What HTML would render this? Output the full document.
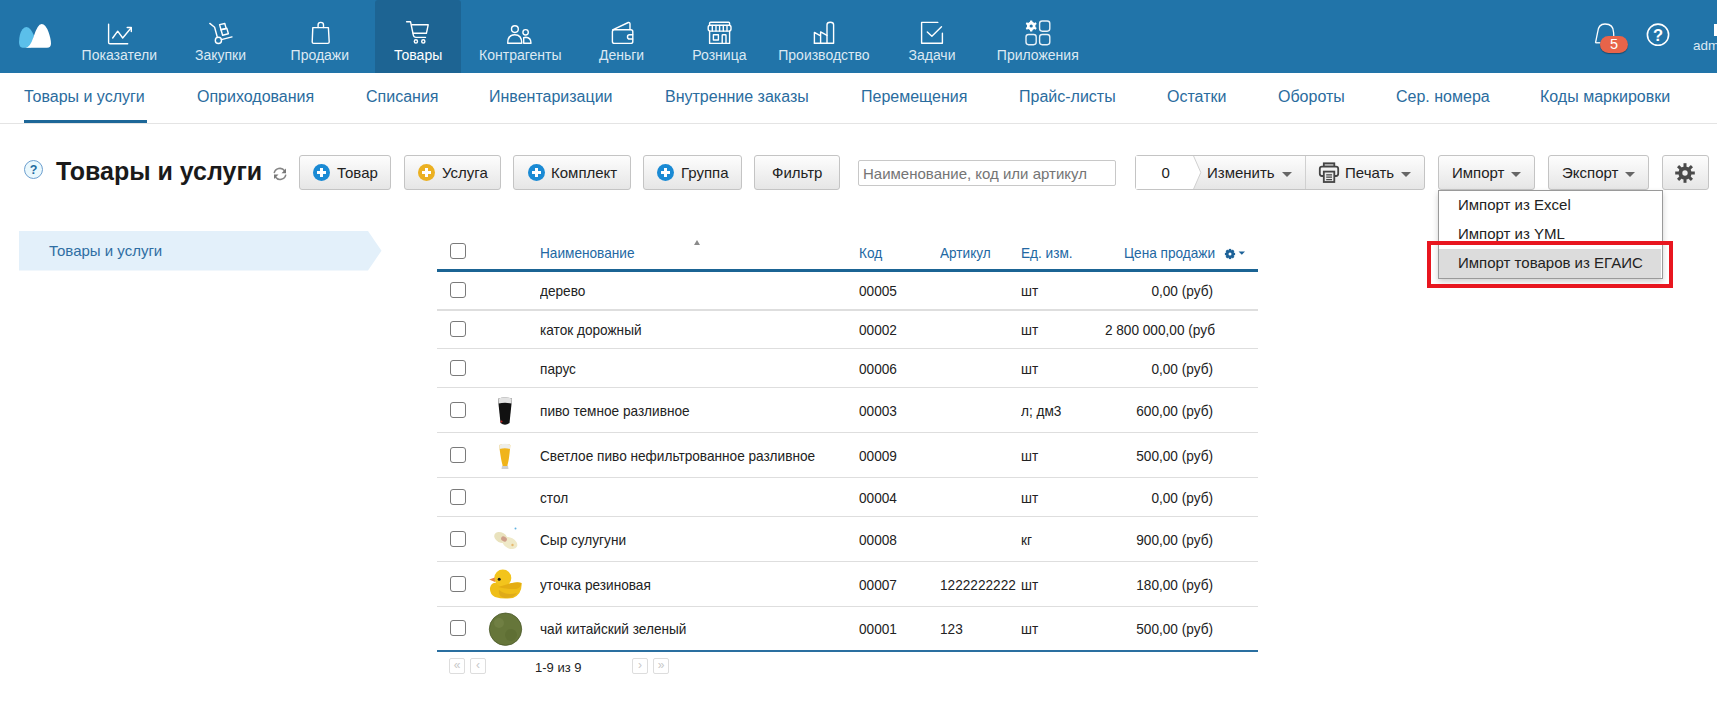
<!DOCTYPE html>
<html><head><meta charset="utf-8">
<style>
*{box-sizing:border-box;margin:0;padding:0}
html,body{width:1717px;height:715px;overflow:hidden;background:#fff;font-family:"Liberation Sans",sans-serif;position:relative}
.abs{position:absolute}
#hdr{position:absolute;left:0;top:0;width:1717px;height:73px;background:#2174a9}
.nav{position:absolute;top:0;height:73px;text-align:center;color:#dce9f3;font-size:14px}
.nav .lbl{position:absolute;left:0;right:0;top:46px;white-space:nowrap}
.nav svg{position:absolute;top:20px;left:50%;margin-left:-13px}
#act{position:absolute;left:375px;top:0;width:86px;height:73px;background:#1d6493;border-radius:3px 3px 0 0}
.nl{position:absolute;top:47px;width:120px;text-align:center;font-size:14px;white-space:nowrap}
.sub{position:absolute;top:88px;font-size:16px;color:#2a6c9e;white-space:nowrap}
#subline{position:absolute;left:0;top:123px;width:1717px;height:1px;background:#e4e4e4}
#subund{position:absolute;left:24px;top:120px;width:123px;height:3px;background:#1d6798}

.btn{position:absolute;top:155px;height:35px;border:1px solid #c4c4c4;border-radius:3px;background:linear-gradient(#fdfdfd,#e6e6e6);font-size:15px;color:#222;white-space:nowrap}
.btn .t{position:absolute;top:8px}
.plus{position:absolute;top:8px;width:17px;height:17px;border-radius:50%;background:#1a8ad4}
.plus.o{background:#ebb021}
.plus:before{content:"";position:absolute;left:3.6px;top:7.2px;width:9.8px;height:2.6px;background:#fff}
.plus:after{content:"";position:absolute;left:7.2px;top:3.6px;width:2.6px;height:9.8px;background:#fff}
.caret{position:absolute;top:16px;width:0;height:0;border-left:5px solid transparent;border-right:5px solid transparent;border-top:5px solid #666}
.dd{position:absolute;font-size:15px;color:#222;white-space:nowrap}
.row{position:absolute;left:437px;width:821px;border-bottom:1px solid #e0e0e0}
.cell{position:absolute;font-size:14.5px;color:#222;white-space:nowrap;top:0;transform:scaleX(.94);transform-origin:0 0}
.cell.r{transform-origin:100% 0}
.cb{position:absolute;left:13px;width:16px;height:16px;border:1.5px solid #7a7a7a;border-radius:3px;background:#fff}
.th{position:absolute;top:245px;font-size:14.5px;color:#2368a3;white-space:nowrap;transform:scaleX(.94);transform-origin:0 0}
.pg{position:absolute;top:658px;width:16px;height:16px;border:1px solid #ddd;border-radius:2px;color:#c8c8c8;font-size:12px;line-height:13px;text-align:center}
</style></head><body>
<div id="hdr"></div>
<div id="act"></div>
<svg class="abs" style="left:0;top:0" width="1717" height="73" viewBox="0 0 1717 73">
<g fill="none" stroke="#fff" stroke-width="1.4" stroke-linecap="round" stroke-linejoin="round">
<!-- logo -->
<path stroke="none" fill="#5bbfea" d="M22.5,47.7 Q19,47.7 19,42 Q19.3,33.5 22.5,29.3 Q24.5,27 26.6,27 Q28.8,27 30.8,29.8 Q32.5,32.3 34,35.5 L31,47.7 Z"/>
<path stroke="none" fill="#fff" d="M25.5,47.7 Q30,47.7 33.5,37 Q37.5,24 41.7,24 Q45.5,24 48.5,32 Q51,39 51,43.5 Q51,47.7 47,47.7 Z"/>
<!-- pokazateli -->
<path d="M108.6,24.2 V42.5 Q108.6,43.8 110,43.8 H127.7"/>
<path d="M112.7,38 L117.7,31.2 L122.7,38 L131,28"/>
<path d="M127.2,27.5 H131.3 V31.6"/>
<!-- zakupki -->
<path d="M209.8,23.4 L214.6,27.3 L217.2,36.8"/>
<circle cx="218.4" cy="40.4" r="3.1"/>
<path d="M221.4,39.6 L232,36.9"/>
<path d="M219.6,24.6 L224.8,23.5 L226.2,28.6 L221,29.7 Z"/>
<path d="M221,29.7 L226.8,28.3 L228.4,33.8 L222.6,35.3 Z"/>
<!-- prodazhi -->
<path d="M312.8,27.6 H328.4 L329.2,42 Q329.2,43.4 327.8,43.4 H313.6 Q312.2,43.4 312.2,42 Z"/>
<path d="M318.1,27.6 V24.8 Q318.1,22.4 320.8,22.4 Q323.5,22.4 323.5,24.8 V27.6"/>
<!-- tovary -->
<path d="M406.6,21.7 H410.5 L413.3,35 Q413.7,37.4 416,37.4 H425.5"/>
<path d="M411.8,24.8 H428.2 L426.4,33.3 H413.2"/>
<circle cx="415.9" cy="41.4" r="1.6"/>
<circle cx="423.3" cy="41.4" r="1.6"/>
<!-- kontragenty -->
<circle cx="514.9" cy="29.1" r="3.4"/>
<path d="M507.7,43.2 Q507.7,34.7 514.8,34.7 Q521.8,34.7 521.8,43.2 Z"/>
<circle cx="525.6" cy="32.3" r="2.7"/>
<path d="M523.7,43.2 V37.6 Q524.5,37.3 525.8,37.3 Q531,37.5 531,43.2 Z"/>
<!-- dengi -->
<rect x="612.4" y="29.8" width="20.4" height="13.6" rx="2"/>
<path d="M612.6,29.8 L628.3,22.5 Q630,22.2 630,24 V29.6"/>
<path d="M632.6,34.8 H629.6 Q627.5,34.8 627.5,36.9 Q627.5,39 629.6,39 H632.6"/>
<!-- roznica -->
<path d="M709.6,25 V23.2 Q709.6,22.2 710.6,22.2 H728.6 Q729.6,22.2 729.6,23.2 V25"/>
<rect x="708.2" y="25.3" width="22.8" height="5.8" rx="2"/>
<path d="M712.3,25.5V31 M716,25.5V31 M719.6,25.5V31 M723.3,25.5V31 M727,25.5V31"/>
<path d="M709.6,31.1 V43.4 H729.6 V31.1"/>
<rect x="713.4" y="34.8" width="5" height="5.2"/>
<path d="M722.2,43.4 V35.3 Q722.2,34.7 722.8,34.7 H725.4 Q726,34.7 726,35.3 V43.4"/>
<!-- proizvodstvo -->
<path d="M814.4,43.2 H833.6 V24.8 Q833.6,22.2 830.3,22.2 Q827,22.2 827,24.8 V43.2"/>
<path d="M814.4,43.2 V32.4 L820.6,35.8 V43.2 M820.6,35.8 V31.9 L827,35.4"/>
<!-- zadachi -->
<path d="M937.8,22.4 H921.6 V43.2 H942.4 V33.3"/>
<path d="M927.3,31.9 L931.9,36.3 L941.5,26.8"/>
<!-- prilozheniya -->
<g stroke="#e8f1f7">
<rect x="1039.6" y="21" width="10.2" height="10.2" rx="2.6"/>
<rect x="1026" y="34.5" width="10.2" height="10.2" rx="2.6"/>
<rect x="1039.6" y="34.5" width="10.2" height="10.2" rx="2.6"/>
</g>
</g>
<g transform="translate(1031.2,26)" fill="#fff">
<path d="M-1,-5.6 H1 L1.4,-3.9 Q2.3,-3.6 2.9,-3.1 L4.5,-3.8 L5.5,-2.1 L4.2,-0.9 Q4.3,0 4.2,0.9 L5.5,2.1 L4.5,3.8 L2.9,3.1 Q2.3,3.6 1.4,3.9 L1,5.6 H-1 L-1.4,3.9 Q-2.3,3.6 -2.9,3.1 L-4.5,3.8 L-5.5,2.1 L-4.2,0.9 Q-4.3,0 -4.2,-0.9 L-5.5,-2.1 L-4.5,-3.8 L-2.9,-3.1 Q-2.3,-3.6 -1.4,-3.9 Z M0,-1.6 A1.6,1.6 0 1,0 0,1.6 A1.6,1.6 0 1,0 0,-1.6 Z" fill-rule="evenodd"/>
</g>
<!-- bell -->
<path d="M1595.5,42.8 L1597.6,32.5 Q1598.2,24 1605,24 Q1613.5,24 1613.6,32.5 L1613.8,37" fill="none" stroke="#fff" stroke-width="1.3"/>
<path d="M1595.5,42.8 H1600.5" fill="none" stroke="#fff" stroke-width="1.3"/>
<!-- help -->
<circle cx="1658" cy="34.7" r="10.6" fill="none" stroke="#fff" stroke-width="1.6"/>
</svg>
<div class="abs" style="left:1600px;top:36px;width:28px;height:17px;border-radius:9px;background:#e8644a;box-shadow:0 1px 1px rgba(0,0,0,.35);color:#fff;font-size:14.5px;text-align:center;line-height:17px">5</div>
<div class="abs" style="left:1649px;top:25px;width:18px;text-align:center;color:#fff;font-size:16.5px;font-weight:bold;line-height:20px">?</div>
<div class="abs" style="left:1693px;top:38px;color:#dce9f3;font-size:13.5px;white-space:nowrap">admin</div>
<div class="abs" style="left:1714px;top:24px;width:4px;height:12px;background:#fff"></div>
<div class="nl" style="left:59.3px;color:#dce9f3">Показатели</div>
<div class="nl" style="left:160.5px;color:#dce9f3">Закупки</div>
<div class="nl" style="left:259.8px;color:#dce9f3">Продажи</div>
<div class="nl" style="left:358.2px;color:#fff">Товары</div>
<div class="nl" style="left:460.29999999999995px;color:#dce9f3">Контрагенты</div>
<div class="nl" style="left:561.6px;color:#dce9f3">Деньги</div>
<div class="nl" style="left:659.4px;color:#dce9f3">Розница</div>
<div class="nl" style="left:763.9px;color:#dce9f3">Производство</div>
<div class="nl" style="left:872px;color:#dce9f3">Задачи</div>
<div class="nl" style="left:977.8px;color:#dce9f3">Приложения</div>
<div id="subline"></div>
<div id="subund"></div>
<div class="sub" style="left:24px">Товары и услуги</div>
<div class="sub" style="left:197px">Оприходования</div>
<div class="sub" style="left:366px">Списания</div>
<div class="sub" style="left:489px">Инвентаризации</div>
<div class="sub" style="left:665px">Внутренние заказы</div>
<div class="sub" style="left:861px">Перемещения</div>
<div class="sub" style="left:1019px">Прайс-листы</div>
<div class="sub" style="left:1167px">Остатки</div>
<div class="sub" style="left:1278px">Обороты</div>
<div class="sub" style="left:1396px">Сер. номера</div>
<div class="sub" style="left:1540px">Коды маркировки</div>

<!-- title row -->
<div class="abs" style="left:24px;top:160px;width:19px;height:19px;border-radius:50%;border:1.4px solid #6c9fcf;background:#eaf8fd;color:#1e6aa0;font-size:12.5px;font-weight:bold;text-align:center;line-height:19px">?</div>
<div class="abs" style="left:56px;top:157px;font-size:25px;font-weight:bold;color:#1a1a1a;white-space:nowrap">Товары и услуги</div>
<svg class="abs" style="left:270px;top:164px" width="20" height="20" viewBox="0 0 20 20">
<g fill="none" stroke="#858585" stroke-width="1.5"><path d="M4.2,9.2 A5.8,5.8 0 0 1 14.6,6.8"/><path d="M15.8,10.6 A5.8,5.8 0 0 1 5.4,13"/></g>
<path d="M16,4.5 V9.2 H11.5 Z" fill="#777"/><path d="M4,15.1 V10.4 H8.5 Z" fill="#777"/>
</svg>
<div class="btn" style="left:299px;width:92px"><div class="plus" style="left:13px"></div><div class="t" style="left:37px">Товар</div></div>
<div class="btn" style="left:404px;width:97px"><div class="plus o" style="left:13px"></div><div class="t" style="left:37px">Услуга</div></div>
<div class="btn" style="left:513px;width:118px"><div class="plus" style="left:14px"></div><div class="t" style="left:37px">Комплект</div></div>
<div class="btn" style="left:643px;width:99px"><div class="plus" style="left:13px"></div><div class="t" style="left:37px">Группа</div></div>
<div class="btn" style="left:754px;width:86px"><div class="t" style="left:17px">Фильтр</div></div>
<div class="abs" style="left:858px;top:160px;width:258px;height:26px;border:1px solid #c8c8c8;border-radius:2px;background:#fff;font-size:15px;color:#757575;padding:4px 0 0 4px;white-space:nowrap">Наименование, код или артикул</div>
<!-- group -->
<div class="btn" style="left:1135px;width:290px"></div>
<svg class="abs" style="left:1136px;top:156px" width="70" height="33"><path d="M0,0 H57.6 L64.8,16.5 L57.6,33 H0 Z" fill="#fff"/><path d="M57.6,0 L64.8,16.5 L57.6,33" fill="none" stroke="#d0d0d0" stroke-width="1"/></svg>
<div class="dd" style="left:1161.5px;top:164px">0</div>
<div class="dd" style="left:1207px;top:164px">Изменить</div>
<div class="caret" style="left:1282px;top:172px"></div>
<div class="abs" style="left:1305px;top:156px;width:1px;height:33px;background:#d0d0d0"></div>
<svg class="abs" style="left:1318px;top:162px" width="22" height="21" viewBox="0 0 22 21">
<g fill="none" stroke="#444" stroke-width="1.8">
<rect x="5.8" y="1.3" width="10.5" height="3.5" fill="#c8c8c8"/>
<rect x="1.8" y="4.6" width="18.4" height="9.4" rx="2.2" fill="#f2f2f2"/>
<rect x="5.8" y="9.6" width="10.5" height="10.4" fill="#e8e8e8"/>
</g>
<path d="M8.2,12.8 H14 M8.2,15.2 H14 M8.2,17.6 H14" stroke="#444" stroke-width="1.2"/>
</svg>
<div class="dd" style="left:1345px;top:164px">Печать</div>
<div class="caret" style="left:1401px;top:172px"></div>
<div class="btn" style="left:1438px;width:97px"><div class="t" style="left:13px">Импорт</div><div class="caret" style="left:72px"></div></div>
<div class="btn" style="left:1548px;width:101px"><div class="t" style="left:13px">Экспорт</div><div class="caret" style="left:76px"></div></div>
<div class="btn" style="left:1662px;width:47px"></div>
<svg class="abs" style="left:1674px;top:162px" width="22" height="22" viewBox="-11 -11 22 22">
<g fill="#4a4a4a"><circle r="6.6"/>
<g id="tooth"><rect x="-1.5" y="-9.8" width="3" height="4"/></g>
<use href="#tooth" transform="rotate(45)"/><use href="#tooth" transform="rotate(90)"/><use href="#tooth" transform="rotate(135)"/><use href="#tooth" transform="rotate(180)"/><use href="#tooth" transform="rotate(225)"/><use href="#tooth" transform="rotate(270)"/><use href="#tooth" transform="rotate(315)"/>
</g><circle r="2.7" fill="#efefef"/>
</svg>
<!-- dropdown -->
<div class="abs" style="left:1438px;top:190px;width:225px;height:89px;border:1px solid #9a9a9a;background:#fff;box-shadow:0 3px 6px rgba(0,0,0,.18)"></div>
<div class="abs" style="left:1439px;top:249px;width:222px;height:29px;background:#dcdcdc"></div>
<div class="dd" style="left:1458px;top:196px">Импорт из Excel</div>
<div class="dd" style="left:1458px;top:225px">Импорт из YML</div>
<div class="dd" style="left:1458px;top:254px">Импорт товаров из ЕГАИС</div>
<div class="abs" style="left:1427px;top:241px;width:246px;height:47px;border:4.5px solid #e8161f"></div>
<!-- sidebar -->
<svg class="abs" style="left:19px;top:231px" width="364" height="40"><path d="M0,0 H349 L362.5,19.7 L349,39.5 H0 Z" fill="#e3f0fa"/></svg>
<div class="abs" style="left:49px;top:242px;font-size:15px;color:#2f6ea3;white-space:nowrap">Товары и услуги</div>
<!-- table -->
<div class="abs" style="left:450px;top:243px;width:16px;height:16px;border:1.5px solid #7a7a7a;border-radius:3px"></div>
<div class="th" style="left:540px">Наименование</div>
<div class="abs" style="left:694px;top:240px;width:0;height:0;border-left:3px solid transparent;border-right:3px solid transparent;border-bottom:5px solid #8a8a8a"></div>
<div class="th" style="left:859px">Код</div>
<div class="th" style="left:940px">Артикул</div>
<div class="th" style="left:1021px">Ед. изм.</div>
<div class="th" style="left:1124px">Цена продажи</div>
<svg class="abs" style="left:1224px;top:248px" width="24" height="12" viewBox="0 0 24 12"><g transform="translate(6,6)" fill="#1d6298"><circle r="4.1"/><rect x="-1.2" y="-5.1" width="2.4" height="10.2"/><rect x="-5.1" y="-1.2" width="10.2" height="2.4"/><rect x="-1.2" y="-5.1" width="2.4" height="10.2" transform="rotate(45)"/><rect x="-1.2" y="-5.1" width="2.4" height="10.2" transform="rotate(-45)"/></g><circle cx="6" cy="6" r="1.5" fill="#fff"/><path d="M14.6,3.4 H21 L17.8,6.8 Z" fill="#1d6298"/></svg>
<div class="abs" style="left:437px;top:269px;width:821px;height:3px;background:#1b6494"></div>
<div class="abs" style="left:437px;top:309px;width:821px;height:2px;background:#dedede"></div>
<div class="abs" style="left:450px;top:282.0px;width:16px;height:16px;border:1.5px solid #7a7a7a;border-radius:3px"></div>
<div class="cell" style="left:540px;top:273px;height:37px;line-height:37px">дерево</div>
<div class="cell" style="left:859px;top:273px;height:37px;line-height:37px">00005</div>
<div class="cell" style="left:1021px;top:273px;height:37px;line-height:37px">шт</div>
<div class="cell r" style="left:1000px;width:213px;text-align:right;top:273px;height:37px;line-height:37px">0,00 (руб)</div>
<div class="abs" style="left:437px;top:348px;width:821px;height:1px;background:#dedede"></div>
<div class="abs" style="left:450px;top:321.0px;width:16px;height:16px;border:1.5px solid #7a7a7a;border-radius:3px"></div>
<div class="cell" style="left:540px;top:312px;height:37px;line-height:37px">каток дорожный</div>
<div class="cell" style="left:859px;top:312px;height:37px;line-height:37px">00002</div>
<div class="cell" style="left:1021px;top:312px;height:37px;line-height:37px">шт</div>
<div class="cell r" style="left:1000px;width:215px;text-align:right;top:312px;height:37px;line-height:37px">2 800 000,00 (руб</div>
<div class="abs" style="left:437px;top:387px;width:821px;height:1px;background:#dedede"></div>
<div class="abs" style="left:450px;top:359.5px;width:16px;height:16px;border:1.5px solid #7a7a7a;border-radius:3px"></div>
<div class="cell" style="left:540px;top:350px;height:38px;line-height:38px">парус</div>
<div class="cell" style="left:859px;top:350px;height:38px;line-height:38px">00006</div>
<div class="cell" style="left:1021px;top:350px;height:38px;line-height:38px">шт</div>
<div class="cell r" style="left:1000px;width:213px;text-align:right;top:350px;height:38px;line-height:38px">0,00 (руб)</div>
<div class="abs" style="left:437px;top:432px;width:821px;height:1px;background:#dedede"></div>
<div class="abs" style="left:450px;top:401.5px;width:16px;height:16px;border:1.5px solid #7a7a7a;border-radius:3px"></div>
<div class="cell" style="left:540px;top:389px;height:44px;line-height:44px">пиво темное разливное</div>
<div class="cell" style="left:859px;top:389px;height:44px;line-height:44px">00003</div>
<div class="cell" style="left:1021px;top:389px;height:44px;line-height:44px">л; дм3</div>
<div class="cell r" style="left:1000px;width:213px;text-align:right;top:389px;height:44px;line-height:44px">600,00 (руб)</div>
<div class="abs" style="left:437px;top:477px;width:821px;height:1px;background:#dedede"></div>
<div class="abs" style="left:450px;top:446.5px;width:16px;height:16px;border:1.5px solid #7a7a7a;border-radius:3px"></div>
<div class="cell" style="left:540px;top:434px;height:44px;line-height:44px">Светлое пиво нефильтрованное разливное</div>
<div class="cell" style="left:859px;top:434px;height:44px;line-height:44px">00009</div>
<div class="cell" style="left:1021px;top:434px;height:44px;line-height:44px">шт</div>
<div class="cell r" style="left:1000px;width:213px;text-align:right;top:434px;height:44px;line-height:44px">500,00 (руб)</div>
<div class="abs" style="left:437px;top:516px;width:821px;height:1px;background:#dedede"></div>
<div class="abs" style="left:450px;top:488.5px;width:16px;height:16px;border:1.5px solid #7a7a7a;border-radius:3px"></div>
<div class="cell" style="left:540px;top:479px;height:38px;line-height:38px">стол</div>
<div class="cell" style="left:859px;top:479px;height:38px;line-height:38px">00004</div>
<div class="cell" style="left:1021px;top:479px;height:38px;line-height:38px">шт</div>
<div class="cell r" style="left:1000px;width:213px;text-align:right;top:479px;height:38px;line-height:38px">0,00 (руб)</div>
<div class="abs" style="left:437px;top:561px;width:821px;height:1px;background:#dedede"></div>
<div class="abs" style="left:450px;top:530.5px;width:16px;height:16px;border:1.5px solid #7a7a7a;border-radius:3px"></div>
<div class="cell" style="left:540px;top:518px;height:44px;line-height:44px">Сыр сулугуни</div>
<div class="cell" style="left:859px;top:518px;height:44px;line-height:44px">00008</div>
<div class="cell" style="left:1021px;top:518px;height:44px;line-height:44px">кг</div>
<div class="cell r" style="left:1000px;width:213px;text-align:right;top:518px;height:44px;line-height:44px">900,00 (руб)</div>
<div class="abs" style="left:437px;top:606px;width:821px;height:1px;background:#dedede"></div>
<div class="abs" style="left:450px;top:575.5px;width:16px;height:16px;border:1.5px solid #7a7a7a;border-radius:3px"></div>
<div class="cell" style="left:540px;top:563px;height:44px;line-height:44px">уточка резиновая</div>
<div class="cell" style="left:859px;top:563px;height:44px;line-height:44px">00007</div>
<div class="cell" style="left:940px;top:563px;height:44px;line-height:44px">1222222222</div>
<div class="cell" style="left:1021px;top:563px;height:44px;line-height:44px">шт</div>
<div class="cell r" style="left:1000px;width:213px;text-align:right;top:563px;height:44px;line-height:44px">180,00 (руб)</div>
<div class="abs" style="left:450px;top:620.0px;width:16px;height:16px;border:1.5px solid #7a7a7a;border-radius:3px"></div>
<div class="cell" style="left:540px;top:608px;height:43px;line-height:43px">чай китайский зеленый</div>
<div class="cell" style="left:859px;top:608px;height:43px;line-height:43px">00001</div>
<div class="cell" style="left:940px;top:608px;height:43px;line-height:43px">123</div>
<div class="cell" style="left:1021px;top:608px;height:43px;line-height:43px">шт</div>
<div class="cell r" style="left:1000px;width:213px;text-align:right;top:608px;height:43px;line-height:43px">500,00 (руб)</div>
<div class="abs" style="left:437px;top:650px;width:821px;height:1.5px;background:#2a6fa0"></div>
<svg class="abs" style="left:485px;top:390px" width="40" height="260" viewBox="485 390 40 260">
<!-- dark beer -->
<path d="M498.5,398.5 Q505,396.5 511.8,398.5 L511.5,404 L509.5,423 Q505,426.5 500.5,423 L498.5,404 Z" fill="#111"/>
<path d="M498.5,398.5 Q505,396 511.8,398.5 L511.6,403.5 Q505,402 498.6,403.5 Z" fill="#e2e2e2"/>
<circle cx="501.5" cy="421.5" r="1" fill="#c02020"/>
<!-- light beer -->
<path d="M499.3,445 Q505,443 510.3,445 L510,449 Q509,460 507.5,465 L507.5,468 Q505,469.5 502.5,468 L502.5,465 Q501,460 499.6,449 Z" fill="#f0b41a"/>
<path d="M499.3,445 Q505,442.5 510.3,445 L510.1,449 Q505,447.5 499.5,449 Z" fill="#eeeeea"/>
<path d="M502,466 H508 L508.5,469 H501.5 Z" fill="#cfcfcf"/>
<!-- cheese -->
<ellipse cx="500.8" cy="537.5" rx="7" ry="5" transform="rotate(28 500.8 537.5)" fill="#e9e2bd"/>
<ellipse cx="509.8" cy="543" rx="8" ry="5.4" transform="rotate(28 509.8 543)" fill="#efe9c8"/>
<ellipse cx="504" cy="539" rx="3" ry="2.4" transform="rotate(28 504 539)" fill="#cf9f8a"/>
<circle cx="512.5" cy="545" r="1.2" fill="#e6b870"/>
<circle cx="515.5" cy="528.4" r="1" fill="#62b4e2"/>
<!-- duck -->
<path d="M490,588 Q491,582 498,583 Q506,585 512,583 Q518,581.5 521.5,583 Q522.5,594 513,598 Q503,599.5 495,597 Q489.5,594 490,588 Z" fill="#efbe18"/>
<circle cx="502.8" cy="578" r="8.5" fill="#f3c41c"/>
<path d="M498,587 Q505,585 512,583 Q518,582 521.5,583 Q521,588 516,589 Q506,589.5 498,587 Z" fill="#e4ad12"/>
<path d="M499,590 Q507,596 517,593 Q514,598 505,598 Q498,597 499,590 Z" fill="#d9a21a" opacity=".7"/>
<path d="M489.2,579.5 L494.8,577.6 L495,582 Z" fill="#e8853a"/>
<circle cx="499.2" cy="579.2" r="1.5" fill="#1a1a1a"/>
<!-- tea -->
<circle cx="505.5" cy="629.2" r="16.2" fill="#66763a"/>
<circle cx="505.5" cy="629.2" r="16.2" fill="none" stroke="#4c5a2c" stroke-width="0.8"/>
<circle cx="499" cy="623" r="5" fill="#77864a" opacity=".6"/>
<circle cx="511" cy="635" r="6" fill="#5a6a30" opacity=".6"/>
</svg>
<!-- pagination -->
<div class="pg" style="left:449px">«</div>
<div class="pg" style="left:470px">‹</div>
<div class="pg" style="left:632px">›</div>
<div class="pg" style="left:653px">»</div>
<div class="abs" style="left:535px;top:659.5px;font-size:13px;color:#222;white-space:nowrap">1-9 из 9</div>
</body></html>
